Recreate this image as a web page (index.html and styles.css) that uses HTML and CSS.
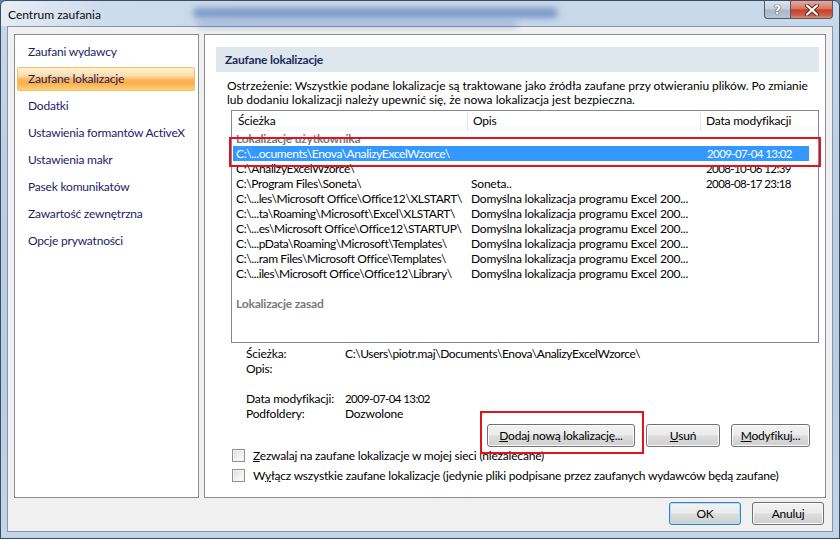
FILE: index.html
```html
<!DOCTYPE html>
<html lang="pl">
<head>
<meta charset="utf-8">
<title>Centrum zaufania</title>
<link rel="stylesheet" href="styles.css">
</head>
<body>
<div class="window">
  <div class="titlebar">
    <div class="blur blur-a"></div>
    <div class="blur blur-b"></div>
    <span class="title">Centrum zaufania</span>
    <div class="caption-buttons">
      <span class="cap-btn help">?</span>
      <span class="cap-btn close">
        <svg width="16" height="12" viewBox="0 0 16 12"><path d="M3 1.5 L13 10.5 M13 1.5 L3 10.5" stroke="#5a2a22" stroke-width="4" stroke-linecap="round"/><path d="M3 1.5 L13 10.5 M13 1.5 L3 10.5" stroke="#ffffff" stroke-width="2.2" stroke-linecap="round"/></svg>
      </span>
    </div>
  </div>
  <div class="client">
    <div class="panels">
      <nav class="sidebar">
        <div class="nav-item">Zaufani wydawcy</div>
        <div class="nav-item active">Zaufane lokalizacje</div>
        <div class="nav-item">Dodatki</div>
        <div class="nav-item">Ustawienia formantów ActiveX</div>
        <div class="nav-item">Ustawienia makr</div>
        <div class="nav-item">Pasek komunikatów</div>
        <div class="nav-item">Zawartość zewnętrzna</div>
        <div class="nav-item">Opcje prywatności</div>
      </nav>
      <main class="content">
        <div class="section-header">Zaufane lokalizacje</div>
        <p class="warning"><span class="l1">Ostrzeżenie: Wszystkie podane lokalizacje są traktowane jako źródła zaufane przy otwieraniu plików. Po zmianie</span><br>lub dodaniu lokalizacji należy upewnić się, że nowa lokalizacja jest bezpieczna.</p>
        <div class="listview">
          <div class="lv-row lv-head">
            <div class="cell">Ścieżka</div>
            <div class="cell">Opis</div>
            <div class="cell">Data modyfikacji</div>
          </div>
          <div class="lv-group">Lokalizacje użytkownika</div>
          <div class="lv-row selected">
            <div class="cell path">C:\...ocuments\Enova\AnalizyExcelWzorce\</div>
            <div class="cell"></div>
            <div class="cell num">2009-07-04 13:02</div>
          </div>
          <div class="lv-row">
            <div class="cell path">C:\AnalizyExcelWzorce\</div>
            <div class="cell"></div>
            <div class="cell num">2008-10-06 12:39</div>
          </div>
          <div class="lv-row">
            <div class="cell path">C:\Program Files\Soneta\</div>
            <div class="cell">Soneta..</div>
            <div class="cell num">2008-08-17 23:18</div>
          </div>
          <div class="lv-row">
            <div class="cell path">C:\...les\Microsoft Office\Office12\XLSTART\</div>
            <div class="cell">Domyślna lokalizacja programu Excel 200...</div>
            <div class="cell"></div>
          </div>
          <div class="lv-row">
            <div class="cell path">C:\...ta\Roaming\Microsoft\Excel\XLSTART\</div>
            <div class="cell">Domyślna lokalizacja programu Excel 200...</div>
            <div class="cell"></div>
          </div>
          <div class="lv-row">
            <div class="cell path">C:\...es\Microsoft Office\Office12\STARTUP\</div>
            <div class="cell">Domyślna lokalizacja programu Excel 200...</div>
            <div class="cell"></div>
          </div>
          <div class="lv-row">
            <div class="cell path">C:\...pData\Roaming\Microsoft\Templates\</div>
            <div class="cell">Domyślna lokalizacja programu Excel 200...</div>
            <div class="cell"></div>
          </div>
          <div class="lv-row">
            <div class="cell path">C:\...ram Files\Microsoft Office\Templates\</div>
            <div class="cell">Domyślna lokalizacja programu Excel 200...</div>
            <div class="cell"></div>
          </div>
          <div class="lv-row">
            <div class="cell path">C:\...iles\Microsoft Office\Office12\Library\</div>
            <div class="cell">Domyślna lokalizacja programu Excel 200...</div>
            <div class="cell"></div>
          </div>
          <div class="lv-group policy">Lokalizacje zasad</div>
        </div>
        <div class="details">
          <span class="label">Ścieżka:</span><span class="value path">C:\Users\piotr.maj\Documents\Enova\AnalizyExcelWzorce\</span>
          <span class="label">Opis:</span><span class="value"></span>
          <span class="label spacer"></span><span class="value spacer"></span>
          <span class="label">Data modyfikacji:</span><span class="value num">2009-07-04 13:02</span>
          <span class="label">Podfoldery:</span><span class="value">Dozwolone</span>
        </div>
        <div class="actions">
          <button class="btn btn-add"><u>D</u>odaj nową lokalizację...</button>
          <button class="btn btn-remove"><u>U</u>suń</button>
          <button class="btn btn-modify"><u>M</u>odyfikuj...</button>
        </div>
        <div class="checks">
          <label class="check"><span class="box"></span><span><u>Z</u>ezwalaj na zaufane lokalizacje w mojej sieci (niezalecane)</span></label>
          <label class="check"><span class="box"></span><span>W<u>y</u>łącz wszystkie zaufane lokalizacje (jedynie pliki podpisane przez zaufanych wydawców będą zaufane)</span></label>
        </div>
      </main>
    </div>
    <div class="footer">
      <button class="btn btn-dialog default">OK</button>
      <button class="btn btn-dialog">Anuluj</button>
    </div>
  </div>
  <div class="annot annot-row"></div>
  <div class="annot annot-btn"></div>
</div>
</body>
</html>
```

FILE: styles.css
```css
* { box-sizing: border-box; margin: 0; padding: 0; }
html, body { width: 840px; height: 539px; overflow: hidden; }
body {
  font-family: "Lato", "Liberation Sans", sans-serif;
  font-size: 12px;
  letter-spacing: -0.2px;
  color: #000;
  background: #5f7fa8;
}
.window {
  position: relative;
  width: 840px;
  height: 539px;
  display: flex;
  flex-direction: column;
  border: 1px solid #3d4c5f;
  border-radius: 6px 6px 0 0;
  background: linear-gradient(180deg, #c9d9ec 0%, #bccfe6 30%, #b8cce4 70%, #c4d5ea 100%);
  overflow: hidden;
}
.titlebar {
  position: relative;
  height: 25px;
  display: flex;
  align-items: flex-start;
  background: linear-gradient(100deg, rgba(255,255,255,0.55) 0%, rgba(255,255,255,0.1) 12%, rgba(255,255,255,0) 30%);
}
.blur {
  position: absolute;
  border-radius: 6px;
  filter: blur(3px);
}
.blur-a { left: 192px; top: 7px; width: 365px; height: 10px; background: rgba(58, 98, 170, 0.55); }
.blur-b { left: 196px; top: 21px; width: 320px; height: 6px; background: rgba(70, 110, 180, 0.3); }
.title {
  position: relative;
  padding: 6px 0 0 7px;
  font-size: 12px;
  letter-spacing: 0;
  color: #0a0a0a;
}
.caption-buttons {
  margin-left: auto;
  margin-right: 6px;
  display: flex;
  position: relative;
}
.cap-btn {
  height: 18px;
  display: flex;
  align-items: center;
  justify-content: center;
  border: 1px solid #4d5a6b;
  border-top: none;
}
.help {
  width: 26px;
  border-radius: 0 0 0 4px;
  border-right: none;
  background: linear-gradient(180deg, #dbe4ee 0%, #c3cfdc 48%, #a9b6c6 52%, #b9c6d6 100%);
  color: #fff;
  font-family: "DejaVu Sans", sans-serif;
  font-weight: bold;
  font-size: 13px;
  text-shadow: 0 0 1px #333, 0 0 1px #333;
}
.close {
  width: 43px;
  border-radius: 0 0 4px 0;
  background: linear-gradient(180deg, #e6a99d 0%, #d77866 45%, #c4402a 52%, #d0604c 85%, #e08a70 100%);
}
.client {
  margin: 0 6px 6px 6px;
  flex: 1;
  display: flex;
  flex-direction: column;
  border: 1px solid #8596ab;
  background: #f0f0f0;
  padding: 7px 6px 0 6px;
}
.panels {
  display: flex;
  gap: 5px;
  height: 464px;
}
.sidebar {
  flex: 0 0 185px;
  background: #fff;
  border: 1px solid #898c95;
  padding: 5px 3px 0 2px;
  display: flex;
  flex-direction: column;
  gap: 3px;
}
.nav-item {
  height: 24px;
  line-height: 22px;
  padding-left: 10px;
  border: 1px solid transparent;
  color: #1c1c68;
  white-space: nowrap;
}
.nav-item.active {
  border-color: #f2c060;
  border-radius: 2px;
  background: linear-gradient(180deg, #fff2d6 0%, #fddca8 35%, #fbb257 55%, #fbb04c 70%, #fdd27e 100%);
}
.content {
  position: relative;
  flex: 0 0 622px;
  min-width: 0;
  overflow: hidden;
  background: #fff;
  border: 1px solid #898c95;
  padding: 12px 6px 0 11px;
  display: flex;
  flex-direction: column;
}
.section-header {
  height: 25px;
  line-height: 25px;
  padding-left: 9px;
  background: #dee6ee;
  font-weight: bold;
  color: #1c2a5c;
}
.warning {
  margin: 7px 0 0 11px;
  line-height: 14px;
  letter-spacing: 0;
  white-space: nowrap;
}
.warning .l1 { letter-spacing: -0.06px; }
.listview {
  margin: 3px 0 0 15px;
  height: 233px;
  border: 1px solid #828790;
  background: #fff;
}
.lv-row {
  display: grid;
  grid-template-columns: 236px 233px 108px;
  height: 15px;
  line-height: 15px;
  white-space: nowrap;
}
.lv-row .cell {
  padding: 0 4px;
  overflow: hidden;
}
.lv-row .cell:nth-child(2) { padding-left: 3px; }
.lv-row .cell:nth-child(3) { padding-left: 5px; }
.path { letter-spacing: -0.38px; }
.num { font-size: 11.5px; letter-spacing: -0.6px; }
.lv-head {
  height: 20px;
  line-height: 20px;
  background: linear-gradient(180deg, #ffffff 0%, #ffffff 60%, #f7f8fa 100%);
}
.lv-head .cell { padding-left: 6px; border-right: 1px solid #e3e8ee; }
.lv-head .cell:nth-child(2) { padding-left: 5px; }
.lv-head .cell:nth-child(3) { padding-left: 5px; border-right: none; }
.lv-group {
  height: 15px;
  line-height: 15px;
  padding-left: 4px;
  font-weight: bold;
  color: #7a7a7a;
}
.lv-group.policy { margin-top: 15px; }
.lv-row.selected {
  margin-left: 1px;
  width: 576px;
  background: #3399ff;
  color: #fff;
}
.lv-row.selected .cell:first-child { padding-left: 3px; }
.details {
  margin: 3px 0 0 30px;
  display: grid;
  grid-template-columns: 99px auto;
  line-height: 15px;
}
.details .spacer { height: 15px; }
.actions {
  display: flex;
  justify-content: flex-end;
  gap: 11px;
  margin: 3px 9px 0 0;
}
.btn {
  height: 23px;
  font: inherit;
  letter-spacing: -0.2px;
  color: #000;
  border: 1px solid #707070;
  border-radius: 3px;
  background: linear-gradient(180deg, #f2f2f2 0%, #ebebeb 48%, #dddddd 52%, #cfcfcf 100%);
  box-shadow: inset 0 0 0 1px #fbfbfb;
}
.btn u { text-underline-offset: 1px; }
.btn-add { width: 148px; }
.btn-remove { width: 74px; }
.btn-modify { width: 79px; }
.checks {
  margin: -2px 0 0 16px;
  display: flex;
  flex-direction: column;
}
.check {
  display: flex;
  align-items: center;
  gap: 8px;
  height: 20px;
}
.check .box {
  width: 13px;
  height: 13px;
  border: 1px solid #8e8f8f;
  background: linear-gradient(135deg, #dcdcdc 0%, #f2f2f2 60%, #ffffff 100%);
  box-shadow: inset 0 0 0 1px #f4f4f4;
}
.footer {
  display: flex;
  justify-content: flex-end;
  gap: 11px;
  padding: 4px 2px 0 0;
}
.btn-dialog { width: 72px; }
.btn.default {
  border-color: #3c7fb1;
  box-shadow: inset 0 0 0 1px #a8e3fb;
}
.annot {
  position: absolute;
  border: 2px solid #e3121d;
}
.annot-row { left: 228px; top: 136px; width: 592px; height: 30px; }
.annot-btn { left: 479px; top: 410px; width: 164px; height: 43px; }
```
